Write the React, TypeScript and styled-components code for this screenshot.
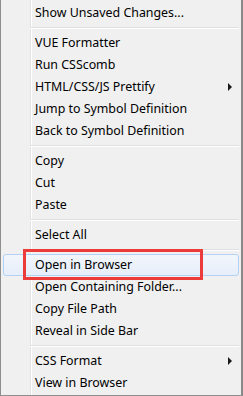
import React from "react";
import styled, { createGlobalStyle } from "styled-components";

type Entry =
  | { kind: "item"; label: string; submenu?: boolean; active?: boolean }
  | { kind: "sep" };

const entries: Entry[] = [
  { kind: "item", label: "Show Unsaved Changes..." },
  { kind: "sep" },
  { kind: "item", label: "VUE Formatter" },
  { kind: "item", label: "Run CSScomb" },
  { kind: "item", label: "HTML/CSS/JS Prettify", submenu: true },
  { kind: "item", label: "Jump to Symbol Definition" },
  { kind: "item", label: "Back to Symbol Definition" },
  { kind: "sep" },
  { kind: "item", label: "Copy" },
  { kind: "item", label: "Cut" },
  { kind: "item", label: "Paste" },
  { kind: "sep" },
  { kind: "item", label: "Select All" },
  { kind: "sep" },
  { kind: "item", label: "Open in Browser", active: true },
  { kind: "item", label: "Open Containing Folder..." },
  { kind: "item", label: "Copy File Path" },
  { kind: "item", label: "Reveal in Side Bar" },
  { kind: "sep" },
  { kind: "item", label: "CSS Format", submenu: true },
  { kind: "item", label: "View in Browser" },
];

function App() {
  return (
    <>
      <GlobalStyle />
      <Menu>
        {entries.map((e, i) =>
          e.kind === "sep" ? (
            <Separator key={i} />
          ) : (
            <Item key={i} $active={e.active}>
              <Label>{e.label}</Label>
              {e.submenu && <Arrow />}
            </Item>
          )
        )}
        <Annotation />
      </Menu>
    </>
  );
}

export default App;

const GlobalStyle = createGlobalStyle`
  html, body {
    margin: 0;
    padding: 0;
    background: #f0f0f0;
  }
`;

const Menu = styled.div`
  position: relative;
  box-sizing: border-box;
  width: 243px;
  height: 396px;
  padding-top: 2px;
  border-left: 1px solid #8e8e8e;
  border-right: 2px solid #8a8a8a;
  border-bottom: 1px solid #8e8e8e;
  background:
    linear-gradient(
      to right,
      transparent 29px,
      #e2e3e3 29px,
      #e2e3e3 30px,
      #ffffff 30px,
      #ffffff 31px,
      transparent 31px
    ),
    #f0f0f0;
  font-family: "Noto Sans", "Liberation Sans", sans-serif;
  font-size: 12.4px;
  color: #000;
`;

const Item = styled.div<{ $active?: boolean }>`
  box-sizing: border-box;
  height: 22px;
  display: flex;
  align-items: center;
  padding-left: ${(p) => (p.$active ? "31px" : "34px")};
  padding-right: 9px;
  padding-bottom: 1px;
  margin: ${(p) => (p.$active ? "0 2px" : "0")};
  border: ${(p) => (p.$active ? "1px solid #b3d1f5" : "none")};
  border-radius: 3px;
  background: ${(p) =>
    p.$active
      ? "linear-gradient(to bottom, #f2f6fc 0%, #e6eefa 100%)"
      : "transparent"};
`;

const Label = styled.span`
  flex: 1;
  white-space: nowrap;
`;

const Arrow = styled.span`
  width: 0;
  height: 0;
  border-left: 4px solid #1a1a1a;
  border-top: 4px solid transparent;
  border-bottom: 4px solid transparent;
`;

const Separator = styled.div`
  height: 8px;
  margin-left: 29px;
  margin-right: 2px;
  background: linear-gradient(
    to bottom,
    transparent 3px,
    #e0e0e0 3px,
    #e0e0e0 4px,
    #ffffff 4px,
    #ffffff 5px,
    transparent 5px
  );
`;

const Annotation = styled.div`
  position: absolute;
  left: 22px;
  top: 249px;
  width: 180px;
  height: 31px;
  border: 3px solid #ec3b3b;
  box-sizing: border-box;
`;
